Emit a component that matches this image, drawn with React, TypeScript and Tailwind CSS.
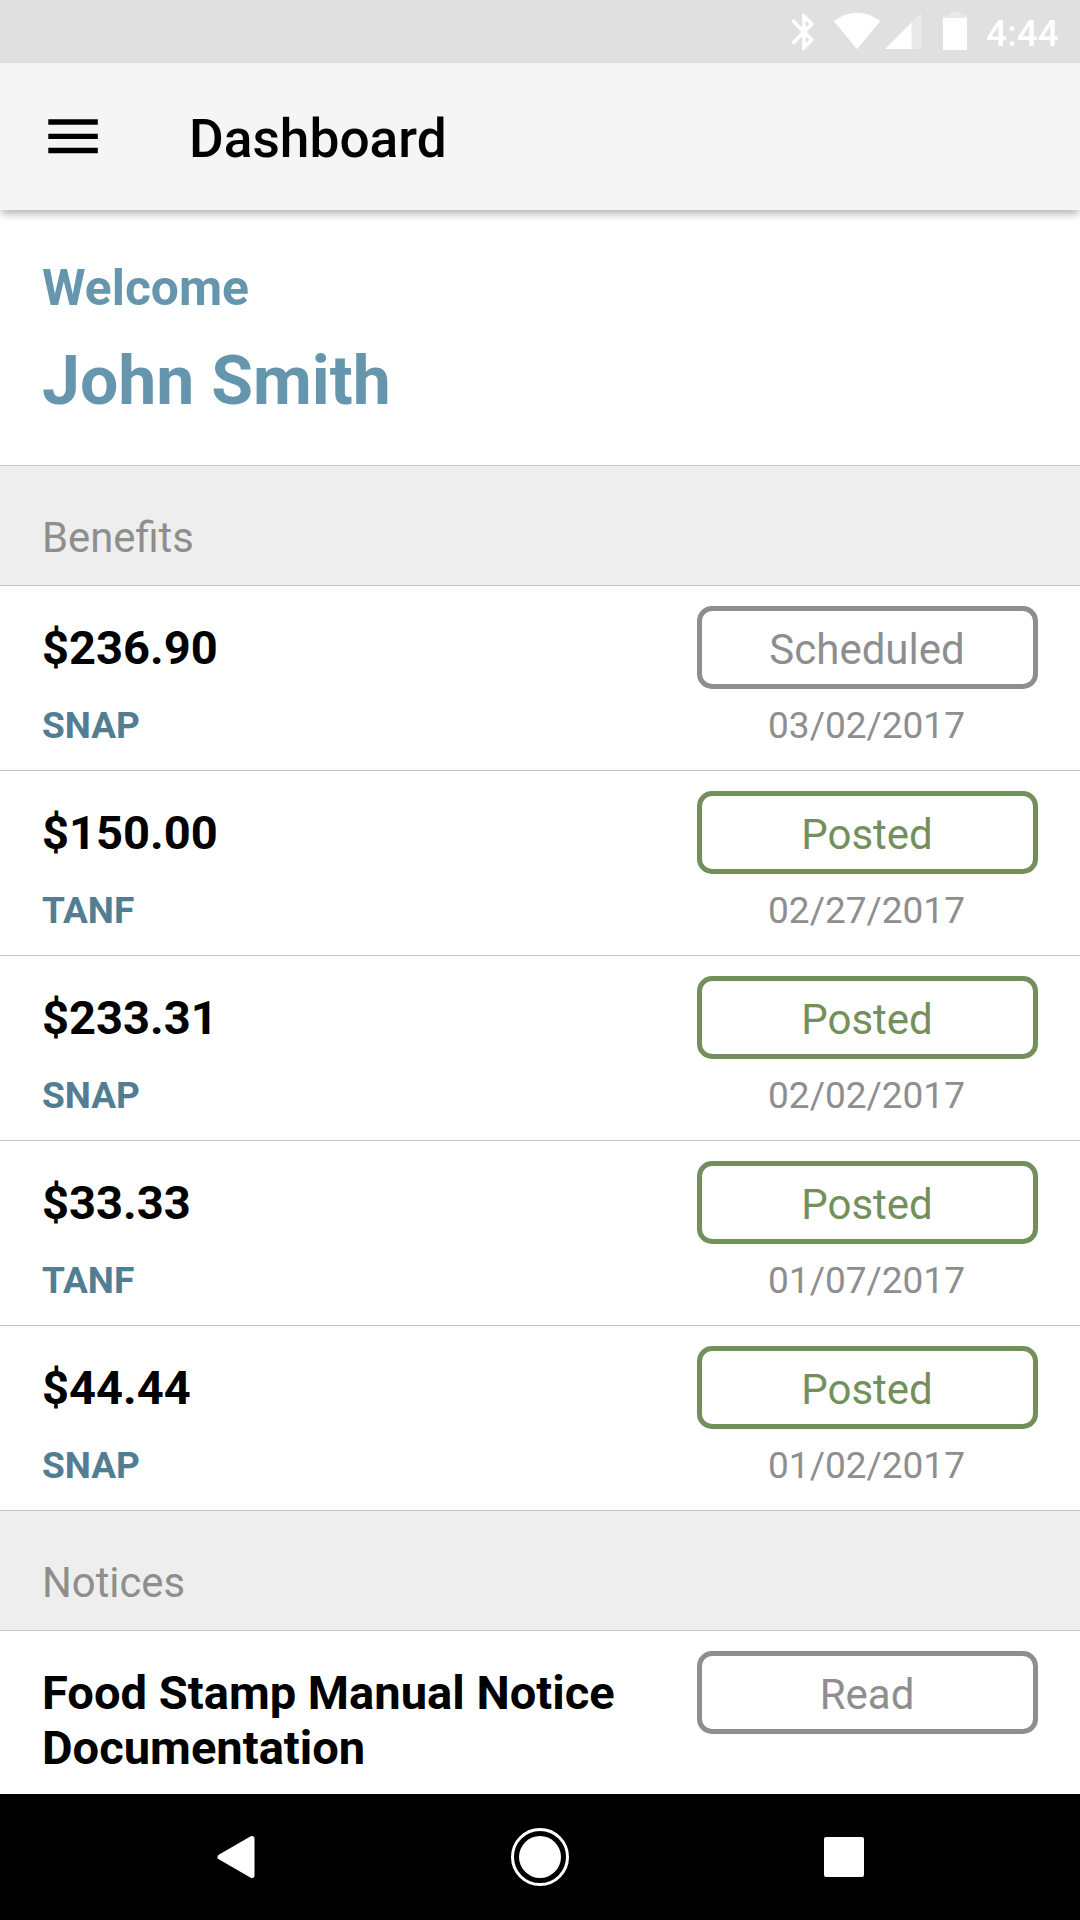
type Entry = { amount: string; program: string; status: "Scheduled" | "Posted"; date: string };

const benefits: Entry[] = [
  { amount: "$236.90", program: "SNAP", status: "Scheduled", date: "03/02/2017" },
  { amount: "$150.00", program: "TANF", status: "Posted", date: "02/27/2017" },
  { amount: "$233.31", program: "SNAP", status: "Posted", date: "02/02/2017" },
  { amount: "$33.33", program: "TANF", status: "Posted", date: "01/07/2017" },
  { amount: "$44.44", program: "SNAP", status: "Posted", date: "01/02/2017" },
];

function StatusBar() {
  return (
    <div className="flex h-[63px] shrink-0 justify-end bg-[#e0e0e0] text-white">
      <svg width="300" height="63" viewBox="780 0 300 63" fill="currentColor">
        <path
          transform="translate(782.2 9.700) scale(1.810 1.850)"
          d="M17.710 7.710L12 2h-1v7.590L6.410 5 5 6.410 10.590 12 5 17.590 6.410 19 11 14.410V22h1l5.710-5.710-4.300-4.290 4.300-4.290zM13 5.830l1.880 1.880L13 9.590V5.830zm1.880 10.460L13 18.170v-3.760l1.880 1.880z"
        />
        <path d="M833.700 21q23.300-16.500 46.600 0L857 49.200z" />
        <path d="M921.300 12.500V49H885z" opacity=".3" />
        <path d="M911.500 22.500V49H885z" />
        <path d="M943 18v-3h7v-3h11v3h6v3z" opacity=".3" />
        <path d="M943 18h24v32h-24z" />
        <text x="986" y="46" fontSize="37" fontWeight="500" fontFamily="Roboto, sans-serif">
          4:44
        </text>
      </svg>
    </div>
  );
}

function Badge({ label }: { label: string }) {
  const tone = label === "Posted" ? "border-[#73905c] text-[#73905c]" : "border-[#8e8e8e] text-[#8e8e8e]";
  return (
    <div className={`flex h-[83px] w-[341px] items-center justify-center rounded-[15px] border-[5px] text-[42px] ${tone}`}>
      <span className="pt-1 pr-px">{label}</span>
    </div>
  );
}

function SectionHeader({ title }: { title: string }) {
  return (
    <h2 className="h-[121px] shrink-0 border-y border-[#c4c4c4] bg-[#eee] px-[42px] pt-[47px] text-[41.8px] leading-[50px] text-[#8e8e8e]">
      {title}
    </h2>
  );
}

function BenefitRow({ entry }: { entry: Entry }) {
  return (
    <li className="flex h-[185px] justify-between border-b border-[#c4c4c4] px-[42px] last:h-[184px] last:border-b-0">
      <div className="pt-[34px]">
        <div className="text-[47.1px] leading-[56px] font-bold text-black">{entry.amount}</div>
        <div className="mt-[28px] text-[37px] leading-[43px] font-bold text-[#517e92]">{entry.program}</div>
      </div>
      <div className="pt-[20px] text-center">
        <Badge label={entry.status} />
        <div className="mt-[15px] pr-[2px] text-[37px] leading-[43px] text-[#8e8e8e]">{entry.date}</div>
      </div>
    </li>
  );
}

export default function App() {
  return (
    <div className="flex h-[1920px] w-[1080px] flex-col overflow-hidden bg-white font-['Roboto',sans-serif]">
      <StatusBar />
      <header className="z-10 flex h-[147px] shrink-0 items-center bg-[#f5f5f5] px-[48px] shadow-[0_5px_8px_-1px_rgba(0,0,0,0.29)]">
        <svg width="50" height="36" viewBox="0 0 50 36">
          <path d="M.3 3h49.500M.3 17.300h49.500M.3 31.500h49.500" stroke="#000" strokeWidth="5.300" />
        </svg>
        <h1 className="mt-[6px] ml-[91px] text-[53.25px] font-medium text-black">Dashboard</h1>
      </header>
      <main className="flex min-h-0 flex-1 flex-col overflow-hidden">
        <section className="h-[255px] shrink-0 px-[42px] pt-[49px] font-bold text-[#6696ad]">
          <p className="text-[49.8px] leading-[58px]">Welcome</p>
          <p className="mt-[24px] text-[67.9px] leading-[80px]">John Smith</p>
        </section>
        <SectionHeader title="Benefits" />
        <ul className="shrink-0">
          {benefits.map((b) => (
            <BenefitRow key={b.date} entry={b} />
          ))}
        </ul>
        <SectionHeader title="Notices" />
        <div className="flex justify-between px-[42px]">
          <p className="w-[600px] pt-[34px] text-[47.1px] leading-[55px] font-bold text-black">
            Food Stamp Manual Notice Documentation
          </p>
          <div className="pt-[20px]">
            <Badge label="Read" />
          </div>
        </div>
      </main>
      <nav className="h-[126px] shrink-0 bg-black">
        <svg width="1080" height="126" viewBox="0 0 1080 126" fill="#fff">
          <path d="M220 63l32-18.500v37z" stroke="#fff" strokeWidth="5" strokeLinejoin="round" />
          <circle cx="540" cy="63" r="21" />
          <circle cx="540" cy="63" r="27.500" fill="none" stroke="#fff" strokeWidth="3" />
          <rect x="824" y="43" width="40" height="40" rx="2" />
        </svg>
      </nav>
    </div>
  );
}
